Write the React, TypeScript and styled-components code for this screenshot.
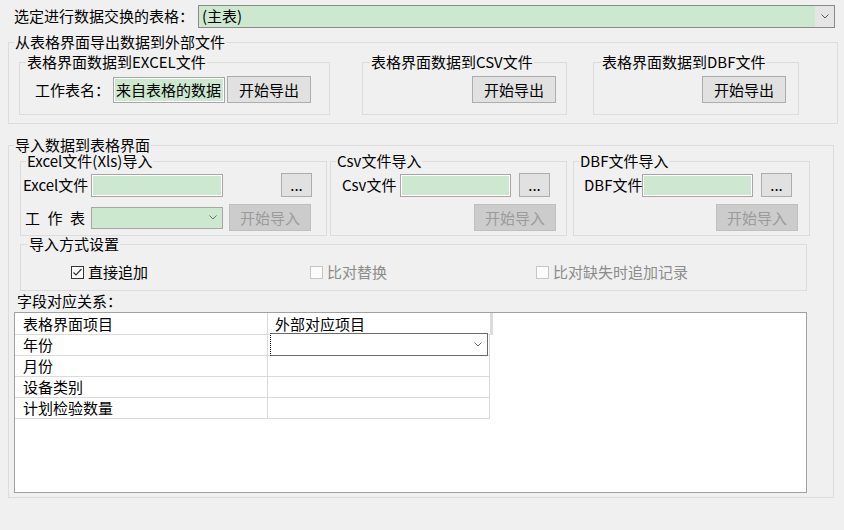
import React from 'react';
import styled, { createGlobalStyle } from 'styled-components';

const Global = createGlobalStyle`
  html, body { margin: 0; padding: 0; background: #f0f0f0; }
  body {
    font-family: "Noto Sans CJK SC", "Noto Sans", sans-serif;
    font-size: 15px;
    color: #000;
  }
  * { box-sizing: border-box; }
`;

const GREEN = '#cce8cf';

const Page = styled.div`
  width: 844px;
  height: 530px;
  overflow: hidden;
  background: #f0f0f0;
  padding-top: 5px;
  display: flex;
  flex-direction: column;
`;

const TopRow = styled.div`
  display: flex;
  align-items: center;
  height: 22px;
  padding-left: 14px;
`;

const Label = styled.span<{ w: number; spacing?: number }>`
  flex: none;
  width: ${p => p.w}px;
  line-height: 16px;
  white-space: nowrap;
  letter-spacing: ${p => p.spacing ?? 0}px;
`;

const Combo = styled.div<{ w: number; h: number; bg: string; border: string }>`
  flex: none;
  display: flex;
  align-items: stretch;
  width: ${p => p.w}px;
  height: ${p => p.h}px;
  background: ${p => p.bg};
  border: 1px solid ${p => p.border};
`;

const ComboText = styled.span`
  flex: 1;
  padding-left: 3px;
  line-height: 20px;
  white-space: nowrap;
  overflow: hidden;
`;

const ComboArrow = styled.span<{ w: number; bg: string }>`
  flex: none;
  width: ${p => p.w}px;
  background: ${p => p.bg};
  display: flex;
  align-items: center;
  justify-content: center;
`;

const Group = styled.div<{ w: number; h: number; ml?: number; mt?: number }>`
  flex: none;
  width: ${p => p.w}px;
  height: ${p => p.h}px;
  margin-left: ${p => p.ml ?? 0}px;
  margin-top: ${p => p.mt ?? 0}px;
  border: 1px solid #dcdcdc;
  display: flex;
  flex-direction: column;
`;

const Title = styled.div<{ ml: number }>`
  align-self: flex-start;
  margin: -9px 0 0 ${p => p.ml}px;
  padding: 0 1px;
  background: #f0f0f0;
  line-height: 16px;
  height: 16px;
  white-space: nowrap;
`;

const SubRow = styled.div<{ mt: number }>`
  display: flex;
  align-items: flex-start;
  margin-top: ${p => p.mt}px;
`;

const FieldRow = styled.div<{ mt: number; h: number; pl?: number; pr?: number; end?: boolean }>`
  display: flex;
  align-items: center;
  justify-content: ${p => (p.end ? 'flex-end' : 'flex-start')};
  margin-top: ${p => p.mt}px;
  height: ${p => p.h}px;
  padding-left: ${p => p.pl ?? 0}px;
  padding-right: ${p => p.pr ?? 0}px;
`;

const TextBox = styled.input<{ w: number; h: number }>`
  flex: none;
  width: ${p => p.w}px;
  height: ${p => p.h}px;
  margin: 0;
  padding: 0 0 0 2px;
  font: inherit;
  font-size: 15px;
  color: #000;
  background: ${GREEN};
  border: 1px solid #a6a6a6;
  box-shadow: inset 0 0 0 1px #ffffff;
  outline: none;
`;

const Btn = styled.button<{ w: number; h: number; ml?: number }>`
  flex: none;
  width: ${p => p.w}px;
  height: ${p => p.h}px;
  margin: 0 0 0 ${p => p.ml ?? 0}px;
  padding: 0;
  font: inherit;
  font-size: 15px;
  line-height: 16px;
  color: #000;
  background: #e1e1e1;
  border: 1px solid #adadad;
  &:disabled {
    color: #9b9b9b;
    background: #cccccc;
    border-color: #bfbfbf;
  }
`;

const CheckRow = styled.div`
  display: grid;
  grid-template-columns: 239px 226px auto;
  align-items: center;
  height: 20px;
  margin-top: 10px;
  padding-left: 50px;
`;

const CheckItem = styled.div<{ off?: boolean }>`
  display: flex;
  align-items: center;
  gap: 4px;
  line-height: 16px;
  white-space: nowrap;
  color: ${p => (p.off ? '#8c8c8c' : '#000')};
`;

const CheckBox = styled.span<{ off?: boolean }>`
  flex: none;
  width: 13px;
  height: 13px;
  border: 1px solid ${p => (p.off ? '#c6c6c6' : '#333333')};
  background: ${p => (p.off ? '#fbfbfb' : '#ffffff')};
  display: flex;
  align-items: center;
  justify-content: center;
`;

const PlainLabel = styled.div<{ ml: number; mt: number }>`
  margin: ${p => p.mt}px 0 0 ${p => p.ml}px;
  line-height: 16px;
  height: 16px;
`;

const GridBox = styled.div<{ w: number; h: number; ml: number; mt: number }>`
  flex: none;
  width: ${p => p.w}px;
  height: ${p => p.h}px;
  margin: ${p => p.mt}px 0 0 ${p => p.ml}px;
  background: #ffffff;
  border: 1px solid #a0a0a0;
`;

const HeadRow = styled.div`
  display: grid;
  grid-template-columns: 253px 222px 3px;
  height: 22px;
`;

const BodyRow = styled.div`
  display: grid;
  grid-template-columns: 253px 222px;
  height: 21px;
`;

const Cell = styled.div<{ pl: number; last?: boolean }>`
  position: relative;
  padding-left: ${p => p.pl}px;
  border-bottom: 1px solid #dadada;
  border-right: ${p => (p.last ? 'none' : '1px solid #dadada')};
  line-height: 20px;
  white-space: nowrap;
`;

const HeadCell = styled(Cell)`
  line-height: 21px;
`;

const Stripe = styled.div`
  background: #dcdcdc;
`;

const CellEditor = styled.div`
  position: absolute;
  left: 2px;
  top: -2px;
  width: 218px;
  height: 23px;
  background: #ffffff;
  border: 1px solid #6a6a6a;
  border-left: 1px dotted #000;
  display: flex;
  justify-content: flex-end;
  align-items: center;
  padding-right: 5px;
`;

const Chevron = ({ color = '#5a5a5a' }: { color?: string }) => (
  <svg width="8" height="5" viewBox="0 0 8 5">
    <polyline points="0.5,0.5 4,4 7.5,0.5" fill="none" stroke={color} strokeWidth="1" />
  </svg>
);

const Tick = () => (
  <svg width="11" height="11" viewBox="0 0 11 11">
    <polyline points="1.5,5.5 4,8 9.5,2" fill="none" stroke="#333" strokeWidth="1.2" />
  </svg>
);

const rows = ['年份', '月份', '设备类别', '计划检验数量'];

export default function App() {
  return (
    <>
      <Global />
      <Page>
        <TopRow>
          <Label w={184}>选定进行数据交换的表格：</Label>
          <Combo w={637} h={23} bg={GREEN} border="#8a8a8a">
            <ComboText>(主表)</ComboText>
            <ComboArrow w={19} bg="#e5e5e5">
              <Chevron />
            </ComboArrow>
          </Combo>
        </TopRow>

        <Group w={830} h={82} ml={8} mt={15}>
          <Title ml={5}>从表格界面导出数据到外部文件</Title>
          <SubRow mt={12}>
            <Group w={311} h={53} ml={10}>
              <Title ml={6}>表格界面数据到EXCEL文件</Title>
              <FieldRow mt={6} h={27} pl={15}>
                <Label w={78}>工作表名：</Label>
                <TextBox w={112} h={26} defaultValue="来自表格的数据" readOnly />
                <Btn w={84} h={27} ml={2}>开始导出</Btn>
              </FieldRow>
            </Group>
            <Group w={205} h={53} ml={32}>
              <Title ml={7}>表格界面数据到CSV文件</Title>
              <FieldRow mt={6} h={27} pr={10} end>
                <Btn w={84} h={27}>开始导出</Btn>
              </FieldRow>
            </Group>
            <Group w={206} h={53} ml={26}>
              <Title ml={7}>表格界面数据到DBF文件</Title>
              <FieldRow mt={6} h={27} pr={12} end>
                <Btn w={84} h={27}>开始导出</Btn>
              </FieldRow>
            </Group>
          </SubRow>
        </Group>

        <Group w={826} h={353} ml={8} mt={21}>
          <Title ml={5}>导入数据到表格界面</Title>
          <SubRow mt={8}>
            <Group w={307} h={75} ml={11}>
              <Title ml={5}>Excel文件(Xls)导入</Title>
              <FieldRow mt={4} h={24} pl={2}>
                <Label w={68}>Excel文件</Label>
                <TextBox w={132} h={23} readOnly />
                <Btn w={31} h={24} ml={58}>...</Btn>
              </FieldRow>
              <FieldRow mt={7} h={27} pl={4}>
                <Label w={66} spacing={7.5}>工作表</Label>
                <Combo w={132} h={22} bg={GREEN} border="#a6a6a6">
                  <ComboText />
                  <ComboArrow w={18} bg={GREEN}>
                    <Chevron color="#707070" />
                  </ComboArrow>
                </Combo>
                <Btn w={82} h={27} ml={6} disabled>开始导入</Btn>
              </FieldRow>
            </Group>
            <Group w={237} h={75} ml={3}>
              <Title ml={5}>Csv文件导入</Title>
              <FieldRow mt={4} h={24} pl={11}>
                <Label w={58}>Csv文件</Label>
                <TextBox w={111} h={23} readOnly />
                <Btn w={31} h={24} ml={8}>...</Btn>
              </FieldRow>
              <FieldRow mt={7} h={27} pr={10} end>
                <Btn w={82} h={27} disabled>开始导入</Btn>
              </FieldRow>
            </Group>
            <Group w={237} h={75} ml={6}>
              <Title ml={5}>DBF文件导入</Title>
              <FieldRow mt={4} h={24} pl={10}>
                <Label w={58}>DBF文件</Label>
                <TextBox w={111} h={23} readOnly />
                <Btn w={31} h={24} ml={8}>...</Btn>
              </FieldRow>
              <FieldRow mt={7} h={27} pr={11} end>
                <Btn w={82} h={27} disabled>开始导入</Btn>
              </FieldRow>
            </Group>
          </SubRow>

          <Group w={787} h={47} ml={11} mt={8}>
            <Title ml={7}>导入方式设置</Title>
            <CheckRow>
              <CheckItem>
                <CheckBox>
                  <Tick />
                </CheckBox>
                直接追加
              </CheckItem>
              <CheckItem off>
                <CheckBox off />
                比对替换
              </CheckItem>
              <CheckItem off>
                <CheckBox off />
                比对缺失时追加记录
              </CheckItem>
            </CheckRow>
          </Group>

          <PlainLabel ml={8} mt={2}>字段对应关系：</PlainLabel>

          <GridBox w={793} h={181} ml={5} mt={3}>
            <HeadRow>
              <HeadCell pl={8}>表格界面项目</HeadCell>
              <HeadCell pl={7} last>外部对应项目</HeadCell>
              <Stripe />
            </HeadRow>
            {rows.map((r, i) => (
              <BodyRow key={r}>
                <Cell pl={8}>{r}</Cell>
                <Cell pl={7}>
                  {i === 0 && (
                    <CellEditor>
                      <Chevron color="#6a6a6a" />
                    </CellEditor>
                  )}
                </Cell>
              </BodyRow>
            ))}
          </GridBox>
        </Group>
      </Page>
    </>
  );
}
